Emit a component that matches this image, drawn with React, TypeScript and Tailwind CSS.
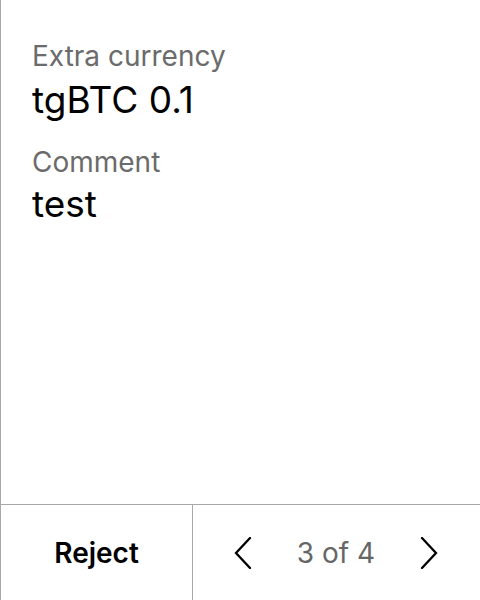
import React from 'react';

const Chevron = ({ dir }: { dir: 'left' | 'right' }) => (
  <svg width="18" height="32" viewBox="0 0 18 32" fill="none" className="shrink-0">
    <polyline
      points={dir === 'left' ? '16,1 2,16 16,31' : '2,1 16,16 2,31'}
      stroke="#000"
      strokeWidth={2.3}
      strokeLinecap="round"
      strokeLinejoin="miter"
    />
  </svg>
);

export default function App() {
  return (
    <div
      className="w-[480px] h-[600px] bg-white border-l border-[#a8a8a8] flex flex-col"
      style={{ fontFamily: 'Inter, "Noto Sans", sans-serif' }}
    >
      <div className="flex-1 flex flex-col pl-[31px] pt-[39px]">
        <span className="text-[28px] leading-[34px] text-[#6b6b6b]">Extra currency</span>
        <span className="text-[37px] leading-[44px] text-black mt-[5px]">tgBTC 0.1</span>
        <span className="text-[28px] leading-[34px] text-[#6b6b6b] mt-[23px]">Comment</span>
        <span className="text-[37px] leading-[44px] text-black mt-[3px]">test</span>
      </div>
      <div className="h-[96px] border-t border-[#a8a8a8] flex">
        <button className="w-[191px] h-full flex items-center justify-center text-[28px] font-semibold text-black">
          Reject
        </button>
        <div className="flex-1 h-full border-l border-[#a8a8a8] flex items-center justify-between pl-[41px] pr-[42px]">
          <Chevron dir="left" />
          <span className="text-[28px] text-[#666666]">3 of 4</span>
          <Chevron dir="right" />
        </div>
      </div>
    </div>
  );
}
